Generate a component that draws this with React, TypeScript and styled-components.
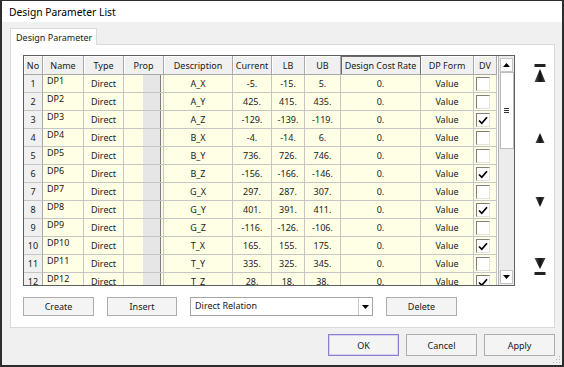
import React from "react";
import styled, { createGlobalStyle } from "styled-components";

interface IParam {
  no: number;
  name: string;
  desc: string;
  current: string;
  lb: string;
  ub: string;
  dv: boolean;
}

const params: IParam[] = [
  { no: 1, name: "DP1", desc: "A_X", current: "-5.", lb: "-15.", ub: "5.", dv: false },
  { no: 2, name: "DP2", desc: "A_Y", current: "425.", lb: "415.", ub: "435.", dv: false },
  { no: 3, name: "DP3", desc: "A_Z", current: "-129.", lb: "-139.", ub: "-119.", dv: true },
  { no: 4, name: "DP4", desc: "B_X", current: "-4.", lb: "-14.", ub: "6.", dv: false },
  { no: 5, name: "DP5", desc: "B_Y", current: "736.", lb: "726.", ub: "746.", dv: false },
  { no: 6, name: "DP6", desc: "B_Z", current: "-156.", lb: "-166.", ub: "-146.", dv: true },
  { no: 7, name: "DP7", desc: "G_X", current: "297.", lb: "287.", ub: "307.", dv: false },
  { no: 8, name: "DP8", desc: "G_Y", current: "401.", lb: "391.", ub: "411.", dv: true },
  { no: 9, name: "DP9", desc: "G_Z", current: "-116.", lb: "-126.", ub: "-106.", dv: false },
  { no: 10, name: "DP10", desc: "T_X", current: "165.", lb: "155.", ub: "175.", dv: true },
  { no: 11, name: "DP11", desc: "T_Y", current: "335.", lb: "325.", ub: "345.", dv: false },
  { no: 12, name: "DP12", desc: "T_Z", current: "28.", lb: "18.", ub: "38.", dv: true },
];

const headers = [
  "No",
  "Name",
  "Type",
  "Prop",
  "Description",
  "Current",
  "LB",
  "UB",
  "Design Cost Rate",
  "DP Form",
  "DV",
];

const COLUMNS = "19px 41px 40px 40px 69px 39px 33px 36px 80px 53px 23px";

const GlobalStyle = createGlobalStyle`
  html, body {
    margin: 0;
    padding: 0;
    background: #f0f0f0;
  }
  body {
    font-family: "Noto Sans", "Open Sans", sans-serif;
    color: #1a1a1a;
  }
  * {
    box-sizing: border-box;
  }
`;

const Window = styled.div`
  position: relative;
  width: 564px;
  height: 367px;
  display: flex;
  flex-direction: column;
  background: #f0f0f0;
  border: 2px solid #2d2d2d;
  border-top-width: 1px;
`;

const TitleBar = styled.div`
  height: 21px;
  display: flex;
  align-items: center;
  padding-left: 7px;
  background: #fff;
  font-size: 10.3px;
  color: #000;
`;

const Body = styled.div`
  flex: 1;
  display: flex;
  flex-direction: column;
  padding: 6px 7px 0 8px;
`;

const TabStrip = styled.div`
  position: relative;
  z-index: 1;
  display: flex;
  height: 17px;
  margin-bottom: -1px;
`;

const Tab = styled.div`
  width: 87px;
  display: flex;
  align-items: center;
  padding-left: 5px;
  background: #fff;
  border: 1px solid #d9d9d9;
  border-bottom: none;
  font-size: 9px;
`;

const Panel = styled.div`
  height: 284px;
  display: flex;
  flex-direction: column;
  padding: 10px 0 0 12px;
  background: #fff;
  border: 1px solid #d9d9d9;
`;

const TopRow = styled.div`
  display: flex;
`;

const GridFrame = styled.div`
  width: 492px;
  height: 231px;
  display: flex;
  border: 1px solid #5f5f5f;
  background: #fff;
`;

const Table = styled.div`
  width: 474px;
  overflow: hidden;
  display: flex;
  flex-direction: column;
`;

const Row = styled.div<{ $header?: boolean }>`
  flex: none;
  display: grid;
  grid-template-columns: ${COLUMNS};
  height: ${(p) => (p.$header ? 19 : 18)}px;
`;

const HeadCell = styled.div<{ $active?: boolean }>`
  display: flex;
  align-items: center;
  justify-content: center;
  background: #f0f0f0;
  border-right: 1px solid ${(p) => (p.$active ? "#6a6a6a" : "#a8a8a8")};
  border-bottom: 1px solid #a8a8a8;
  box-shadow: inset 1px 1px 0 ${(p) => (p.$active ? "#6a6a6a" : "#fff")};
  font-size: 9px;
  white-space: nowrap;
`;

const Cell = styled.div<{ $align?: "top" | "center" }>`
  display: flex;
  align-items: ${(p) => (p.$align === "top" ? "flex-start" : "center")};
  justify-content: ${(p) => (p.$align === "top" ? "flex-start" : "center")};
  padding-left: ${(p) => (p.$align === "top" ? "4px" : "0")};
  background: #ffffe6;
  border-right: 1px solid #c6c6c6;
  border-bottom: 1px solid #c6c6c6;
  font-size: 9px;
  line-height: 11px;
  white-space: nowrap;
`;

const NoCell = styled(Cell)`
  background: #f0f0f0;
  border-right-color: #a8a8a8;
`;

const PropCell = styled(Cell)`
  justify-content: flex-end;
  align-items: stretch;
  padding-right: 2px;
`;

const PropButton = styled.div`
  width: 18px;
  background: #e6e6e6;
  border-right: 1px solid #7d7d7d;
`;

const CheckCell = styled(Cell)`
  justify-content: flex-start;
  align-items: flex-start;
  padding: 2px 0 0 2px;
`;

const CheckBox = styled.div`
  width: 14px;
  height: 14px;
  display: flex;
  align-items: center;
  justify-content: center;
  background: #fff;
  border: 1px solid;
  border-color: #7f7f7f #e3e3e3 #e3e3e3 #7f7f7f;
`;

const ScrollBar = styled.div`
  width: 16px;
  display: flex;
  flex-direction: column;
  align-items: center;
  padding: 2px 0 1px;
  background: #ececec;
  border-left: 1px solid #b4b4b4;
`;

const ArrowButton = styled.div`
  width: 13px;
  height: 14px;
  display: flex;
  align-items: center;
  justify-content: center;
  background: #fff;
  border: 1px solid #c4c4c4;
`;

const Thumb = styled.div`
  width: 14px;
  height: 77px;
  display: flex;
  align-items: center;
  justify-content: flex-start;
  padding-left: 3px;
  background: #fff;
  border: 1px solid #bcbcbc;
`;

const Track = styled.div`
  flex: 1;
`;

const SideBar = styled.div`
  flex: 1;
  display: flex;
  flex-direction: column;
  align-items: center;
  justify-content: space-between;
  padding: 8px 0 9px 10px;
`;

const SideButton = styled.div`
  width: 16px;
  height: 20px;
  display: flex;
  align-items: center;
  justify-content: center;
`;

const ButtonRow = styled.div`
  display: flex;
  align-items: center;
  gap: 13px;
  margin-top: 11px;
`;

const Button = styled.div<{ $width?: number; $focus?: boolean }>`
  width: ${(p) => p.$width ?? 71}px;
  height: ${(p) => (p.$focus !== undefined ? 22 : 19)}px;
  display: flex;
  align-items: center;
  justify-content: center;
  background: #f4f4f4;
  border: 1px solid ${(p) => (p.$focus ? "#8a7fcf" : "#adadad")};
  box-shadow: ${(p) => (p.$focus ? "inset 0 0 0 1px #d7d2f0" : "none")};
  font-size: 9px;
`;

const Combo = styled.div`
  width: 183px;
  height: 19px;
  display: flex;
  background: #fff;
  border: 1px solid #a5a5a5;
  font-size: 9px;
`;

const ComboText = styled.div`
  flex: 1;
  padding: 1px 0 0 4px;
`;

const ComboArrow = styled.div`
  width: 14px;
  display: flex;
  align-items: center;
  justify-content: center;
  border-left: 1px solid #c8c8c8;
`;

const DialogRow = styled.div`
  display: flex;
  justify-content: flex-end;
  gap: 7px;
  margin-top: 6px;
`;

const Grip = styled.svg`
  position: absolute;
  right: 1px;
  bottom: 1px;
`;

const Check = () => (
  <svg width="10" height="9" viewBox="0 0 10 9">
    <path d="M1 4.5 L3.8 7.3 L9 1.3" fill="none" stroke="#000" strokeWidth="1.7" />
  </svg>
);

const SmallArrow = ({ down }: { down?: boolean }) => (
  <svg width="7" height="4" viewBox="0 0 7 4">
    <path d={down ? "M0 0 H7 L3.5 4 Z" : "M0 4 H7 L3.5 0 Z"} fill="#000" />
  </svg>
);

const MoveIcon = ({ down, edge }: { down?: boolean; edge?: boolean }) => (
  <svg width="14" height={edge ? 20 : 12} viewBox={edge ? "0 0 14 20" : "0 0 14 12"}>
    <defs>
      <linearGradient id={down ? "gd" : "gu"} x1="0" y1="0" x2="1" y2="0">
        <stop offset="0" stopColor="#555" />
        <stop offset="0.5" stopColor="#111" />
        <stop offset="1" stopColor="#444" />
      </linearGradient>
    </defs>
    {edge ? (
      down ? (
        <>
          <path d="M1.5 1 H12.5 L7 12 Z" fill={`url(#gd)`} />
          <rect x="1.5" y="15" width="11" height="3" fill="#222" />
        </>
      ) : (
        <>
          <rect x="1.5" y="1" width="11" height="3" fill="#222" />
          <path d="M1.5 19 H12.5 L7 6 Z" fill={`url(#gu)`} />
        </>
      )
    ) : down ? (
      <path d="M2.5 1 H11.5 L7 11 Z" fill={`url(#gd)`} />
    ) : (
      <path d="M2.5 11 H11.5 L7 1 Z" fill={`url(#gu)`} />
    )}
  </svg>
);

function ParamGrid() {
  return (
    <GridFrame>
      <Table>
        <Row $header>
          {headers.map((h) => (
            <HeadCell key={h} $active={h === "Design Cost Rate"}>
              {h}
            </HeadCell>
          ))}
        </Row>
        {params.map((p) => (
          <Row key={p.no}>
            <NoCell>{p.no}</NoCell>
            <Cell $align="top">{p.name}</Cell>
            <Cell>Direct</Cell>
            <PropCell>
              <PropButton />
            </PropCell>
            <Cell>{p.desc}</Cell>
            <Cell>{p.current}</Cell>
            <Cell>{p.lb}</Cell>
            <Cell>{p.ub}</Cell>
            <Cell>0.</Cell>
            <Cell>Value</Cell>
            <CheckCell>
              <CheckBox>{p.dv ? <Check /> : null}</CheckBox>
            </CheckCell>
          </Row>
        ))}
      </Table>
      <ScrollBar>
        <ArrowButton>
          <SmallArrow />
        </ArrowButton>
        <Thumb>
          <svg width="5" height="5" viewBox="0 0 5 5">
            <path d="M0 0.5 H5 M0 2.5 H5 M0 4.5 H5" stroke="#333" strokeWidth="1" />
          </svg>
        </Thumb>
        <Track />
        <ArrowButton>
          <SmallArrow down />
        </ArrowButton>
      </ScrollBar>
    </GridFrame>
  );
}

export default function App() {
  return (
    <>
      <GlobalStyle />
      <Window>
        <TitleBar>Design Parameter List</TitleBar>
        <Body>
          <TabStrip>
            <Tab>Design Parameter</Tab>
          </TabStrip>
          <Panel>
            <TopRow>
              <ParamGrid />
              <SideBar>
                <SideButton>
                  <MoveIcon edge />
                </SideButton>
                <SideButton>
                  <MoveIcon />
                </SideButton>
                <SideButton>
                  <MoveIcon down />
                </SideButton>
                <SideButton>
                  <MoveIcon down edge />
                </SideButton>
              </SideBar>
            </TopRow>
            <ButtonRow>
              <Button>Create</Button>
              <Button $width={70}>Insert</Button>
              <Combo>
                <ComboText>Direct Relation</ComboText>
                <ComboArrow>
                  <SmallArrow down />
                </ComboArrow>
              </Combo>
              <Button>Delete</Button>
            </ButtonRow>
          </Panel>
          <DialogRow>
            <Button $focus>OK</Button>
            <Button $focus={false}>Cancel</Button>
            <Button $focus={false}>Apply</Button>
          </DialogRow>
        </Body>
        <Grip width="8" height="8" viewBox="0 0 8 8">
          <g fill="#b5b5b5">
            <rect x="6" y="0" width="1" height="1" />
            <rect x="3" y="3" width="1" height="1" />
            <rect x="6" y="3" width="1" height="1" />
            <rect x="0" y="6" width="1" height="1" />
            <rect x="3" y="6" width="1" height="1" />
            <rect x="6" y="6" width="1" height="1" />
          </g>
        </Grip>
      </Window>
    </>
  );
}
